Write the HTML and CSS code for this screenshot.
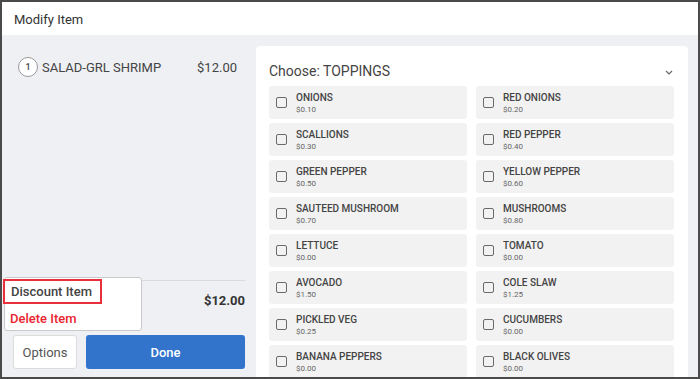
FILE: index.html
```html
<!DOCTYPE html>
<html>
<head>
<meta charset="utf-8">
<link rel="stylesheet" href="styles.css">
</head>
<body>
<div class="frame">
  <div class="header">Modify Item</div>
  <div class="main">
    <div class="left">
      <div class="item-row">
        <span class="qty">1</span>
        <span class="item-name">SALAD-GRL SHRIMP</span>
        <span class="item-price">$12.00</span>
      </div>
      <div class="footer">
        <div class="total">$12.00</div>
        <div class="buttons">
          <button class="btn-options">Options</button>
          <button class="btn-done">Done</button>
        </div>
      </div>
      <div class="menu">
        <div class="menu-item highlight">Discount Item</div>
        <div class="menu-item danger">Delete Item</div>
      </div>
    </div>
    <div class="card">
      <div class="card-head">
        <span class="card-title">Choose: TOPPINGS</span>
        <svg class="chev" width="8" height="5" viewBox="0 0 8 5"><path d="M1 1 L4 4 L7 1" fill="none" stroke="#666" stroke-width="1.2"/></svg>
      </div>
      <div class="grid">
        <div class="opt"><span class="cb"></span><div><div class="opt-name">ONIONS</div><div class="opt-price">$0.10</div></div></div>
        <div class="opt"><span class="cb"></span><div><div class="opt-name">RED ONIONS</div><div class="opt-price">$0.20</div></div></div>
        <div class="opt"><span class="cb"></span><div><div class="opt-name">SCALLIONS</div><div class="opt-price">$0.30</div></div></div>
        <div class="opt"><span class="cb"></span><div><div class="opt-name">RED PEPPER</div><div class="opt-price">$0.40</div></div></div>
        <div class="opt"><span class="cb"></span><div><div class="opt-name">GREEN PEPPER</div><div class="opt-price">$0.50</div></div></div>
        <div class="opt"><span class="cb"></span><div><div class="opt-name">YELLOW PEPPER</div><div class="opt-price">$0.60</div></div></div>
        <div class="opt"><span class="cb"></span><div><div class="opt-name">SAUTEED MUSHROOM</div><div class="opt-price">$0.70</div></div></div>
        <div class="opt"><span class="cb"></span><div><div class="opt-name">MUSHROOMS</div><div class="opt-price">$0.80</div></div></div>
        <div class="opt"><span class="cb"></span><div><div class="opt-name">LETTUCE</div><div class="opt-price">$0.00</div></div></div>
        <div class="opt"><span class="cb"></span><div><div class="opt-name">TOMATO</div><div class="opt-price">$0.00</div></div></div>
        <div class="opt"><span class="cb"></span><div><div class="opt-name">AVOCADO</div><div class="opt-price">$1.50</div></div></div>
        <div class="opt"><span class="cb"></span><div><div class="opt-name">COLE SLAW</div><div class="opt-price">$1.25</div></div></div>
        <div class="opt"><span class="cb"></span><div><div class="opt-name">PICKLED VEG</div><div class="opt-price">$0.25</div></div></div>
        <div class="opt"><span class="cb"></span><div><div class="opt-name">CUCUMBERS</div><div class="opt-price">$0.00</div></div></div>
        <div class="opt"><span class="cb"></span><div><div class="opt-name">BANANA PEPPERS</div><div class="opt-price">$0.00</div></div></div>
        <div class="opt"><span class="cb"></span><div><div class="opt-name">BLACK OLIVES</div><div class="opt-price">$0.00</div></div></div>
      </div>
    </div>
  </div>
</div>
</body>
</html>
```

FILE: styles.css
```css
* { box-sizing: border-box; }
html, body { margin: 0; padding: 0; }
body {
  font-family: Roboto, "Liberation Sans", Arial, sans-serif;
  color: #444;
  background: #fff;
}
.frame {
  width: 700px;
  height: 379px;
  border: 2px solid #4a4a4a;
  display: flex;
  flex-direction: column;
  overflow: hidden;
  background: #eef0f4;
}
.header {
  height: 33px;
  flex: none;
  background: #fff;
  font-size: 13px;
  color: #333;
  padding: 10px 0 0 12px;
}
.main {
  flex: 1;
  display: flex;
  gap: 8px;
  padding: 11px 9px 0 0;
  min-height: 0;
}
.left {
  position: relative;
  width: 246px;
  flex: none;
  display: flex;
  flex-direction: column;
  justify-content: space-between;
  padding: 11px 3px 8px 16px;
}
.item-row {
  display: flex;
  align-items: center;
  font-size: 13px;
  color: #444;
}
.qty {
  width: 20px;
  height: 20px;
  border: 1px solid #999;
  border-radius: 50%;
  background: #fff;
  font-size: 9px;
  font-weight: 500;
  display: flex;
  align-items: center;
  justify-content: center;
  margin-right: 4px;
}
.item-name { flex: 1; }
.item-price { margin-right: 8px; }
.footer {
  margin-left: -5px;
  border-top: 1px solid #d9dbe0;
}
.total {
  text-align: right;
  font-size: 13px;
  font-weight: 700;
  color: #333;
  padding: 12px 0 0 0;
  height: 54px;
}
.buttons {
  display: flex;
  gap: 9px;
}
.btn-options {
  width: 64px;
  height: 34px;
  background: #fff;
  border: 1px solid #dcdcdc;
  border-radius: 3px;
  font-family: inherit;
  font-size: 13px;
  color: #555;
  padding: 0;
}
.btn-done {
  flex: 1;
  height: 34px;
  background: #3274cc;
  border: none;
  border-radius: 3px;
  font-family: inherit;
  font-size: 13px;
  font-weight: 500;
  color: #fff;
}
.menu {
  position: absolute;
  left: 2px;
  top: 231px;
  width: 138px;
  height: 54px;
  background: #fff;
  border: 1px solid #c9c9c9;
  border-radius: 3px;
  display: flex;
  flex-direction: column;
}
.menu-item {
  font-size: 13px;
  font-weight: 500;
  height: 25px;
  display: flex;
  align-items: center;
  padding-left: 6px;
}
.menu-item.highlight {
  color: #444;
  border: 2px solid #e8303a;
  width: 99px;
  margin: 1px 0 0 -2px;
  padding-left: 6px;
}
.menu-item.danger {
  color: #e8262f;
  padding-left: 5px;
  padding-top: 3px;
}
.card {
  width: 432px;
  flex: none;
  background: #fff;
  border-radius: 4px 4px 0 0;
  padding: 15px 13px 0 13px;
  overflow: hidden;
}
.card-head {
  display: flex;
  align-items: center;
  justify-content: space-between;
  padding-right: 2px;
  height: 19px;
  margin-bottom: 6px;
}
.card-title {
  font-size: 14px;
  color: #444;
}
.chev { margin-top: 3px; }
.grid {
  display: grid;
  grid-template-columns: 198px 198px;
  column-gap: 9px;
  row-gap: 4px;
}
.opt {
  height: 33px;
  background: #f2f2f2;
  border-radius: 3px;
  display: flex;
  align-items: center;
  padding-left: 7px;
}
.cb {
  width: 11px;
  height: 11px;
  border: 1.5px solid #6a6a6a;
  border-radius: 2px;
  margin-right: 9px;
  flex: none;
}
.opt-name {
  font-size: 10px;
  font-weight: 500;
  color: #444;
  line-height: 12px;
  margin-top: 2px;
}
.opt-price {
  font-size: 8px;
  color: #666;
  line-height: 12px;
}
```
